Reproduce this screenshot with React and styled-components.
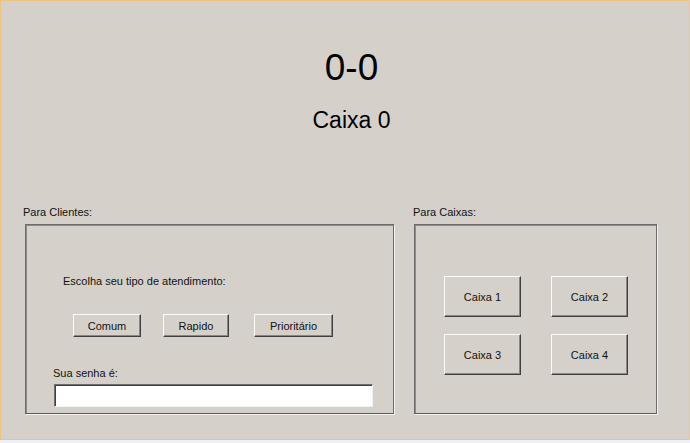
import React, { useState } from "react";
import styled, { createGlobalStyle } from "styled-components";

const GlobalStyle = createGlobalStyle`
  html, body {
    margin: 0;
    padding: 0;
    background: #eef0f4;
  }
  body {
    font-family: "Liberation Sans", Arial, sans-serif;
    font-size: 11px;
    color: #111;
  }
`;

const Window = styled.div`
  box-sizing: border-box;
  width: 690px;
  height: 440px;
  background: #d5d1ca;
  border: 1px solid #f0c383;
  display: flex;
  flex-direction: column;
`;

const Header = styled.div`
  display: flex;
  flex-direction: column;
  align-items: center;
  padding-top: 45px;
  padding-left: 13px;
  height: 160px;
  box-sizing: border-box;
`;

const Counter = styled.div`
  font-size: 37px;
  line-height: 44px;
  color: #000;
`;

const CurrentDesk = styled.div`
  margin-top: 16px;
  font-size: 23px;
  line-height: 28px;
  color: #000;
`;

const Sections = styled.div`
  display: flex;
  gap: 19px;
  padding-left: 22px;
  margin-top: 44px;
`;

const Group = styled.div`
  display: flex;
  flex-direction: column;
  width: ${(p) => p.$width}px;
`;

const GroupLabel = styled.div`
  line-height: 14px;
  margin-bottom: 5px;
`;

const Panel = styled.div`
  box-sizing: border-box;
  margin-left: ${(p) => p.$shift}px;
  height: 190px;
  border-style: solid;
  border-width: 1px;
  border-color: #6b6b6b #6b6b6b #5a5a5a #6b6b6b;
  box-shadow: inset 1px 1px 0 #8e8b86, 1px 1px 0 #f4f3f0;
  display: flex;
  flex-direction: column;
  padding: ${(p) => p.$padding};
`;

const Prompt = styled.div`
  line-height: 14px;
  margin-left: ${(p) => p.$indent}px;
  margin-top: ${(p) => p.$top}px;
`;

const ButtonRow = styled.div`
  display: flex;
  gap: 22px;
  margin-left: 47px;
  margin-top: 26px;
`;

const Button = styled.button`
  box-sizing: border-box;
  width: ${(p) => p.$w}px;
  height: ${(p) => p.$h}px;
  margin-right: ${(p) => p.$after || 0}px;
  padding: 0;
  background: #d5d1ca;
  font-family: "Liberation Sans", Arial, sans-serif;
  font-size: 11px;
  color: #111;
  border: 1px solid;
  border-color: #fbfbfa #3f3f3f #3f3f3f #fbfbfa;
  box-shadow: inset -1px -1px 0 #8a8782;
  cursor: pointer;
`;

const TicketField = styled.input`
  box-sizing: border-box;
  margin-left: 28px;
  margin-top: 4px;
  width: 319px;
  height: 23px;
  background: #fff;
  border: 1px solid;
  border-color: #6f6f6f #f2f2f2 #f2f2f2 #6f6f6f;
  box-shadow: inset 1px 1px 0 #404040;
  outline: none;
  font-family: "Liberation Sans", Arial, sans-serif;
  font-size: 11px;
  padding: 0 4px;
`;

const DeskGrid = styled.div`
  display: grid;
  grid-template-columns: 77px 77px;
  grid-auto-rows: 41px;
  column-gap: 30px;
  row-gap: 17px;
`;

export default function App() {
  const [senha, setSenha] = useState("");
  const desks = [1, 2, 3, 4];

  return (
    <>
      <GlobalStyle />
      <Window>
        <Header>
          <Counter>0-0</Counter>
          <CurrentDesk>Caixa 0</CurrentDesk>
        </Header>
        <Sections>
          <Group $width={371}>
            <GroupLabel>Para Clientes:</GroupLabel>
            <Panel $shift={2} $padding="0">
              <Prompt $indent={37} $top={49}>Escolha seu tipo de atendimento:</Prompt>
              <ButtonRow>
                <Button $w={68} $h={23}>Comum</Button>
                <Button $w={66} $h={23} $after={3}>Rapido</Button>
                <Button $w={79} $h={23}>Prioritário</Button>
              </ButtonRow>
              <Prompt $indent={27} $top={29}>Sua senha é:</Prompt>
              <TicketField value={senha} onChange={(e) => setSenha(e.target.value)} />
            </Panel>
          </Group>
          <Group $width={244}>
            <GroupLabel>Para Caixas:</GroupLabel>
            <Panel $shift={1} $padding="51px 0 0 29px">
              <DeskGrid>
                {desks.map((n) => (
                  <Button key={n} $w={77} $h={41}>
                    Caixa {n}
                  </Button>
                ))}
              </DeskGrid>
            </Panel>
          </Group>
        </Sections>
      </Window>
    </>
  );
}
